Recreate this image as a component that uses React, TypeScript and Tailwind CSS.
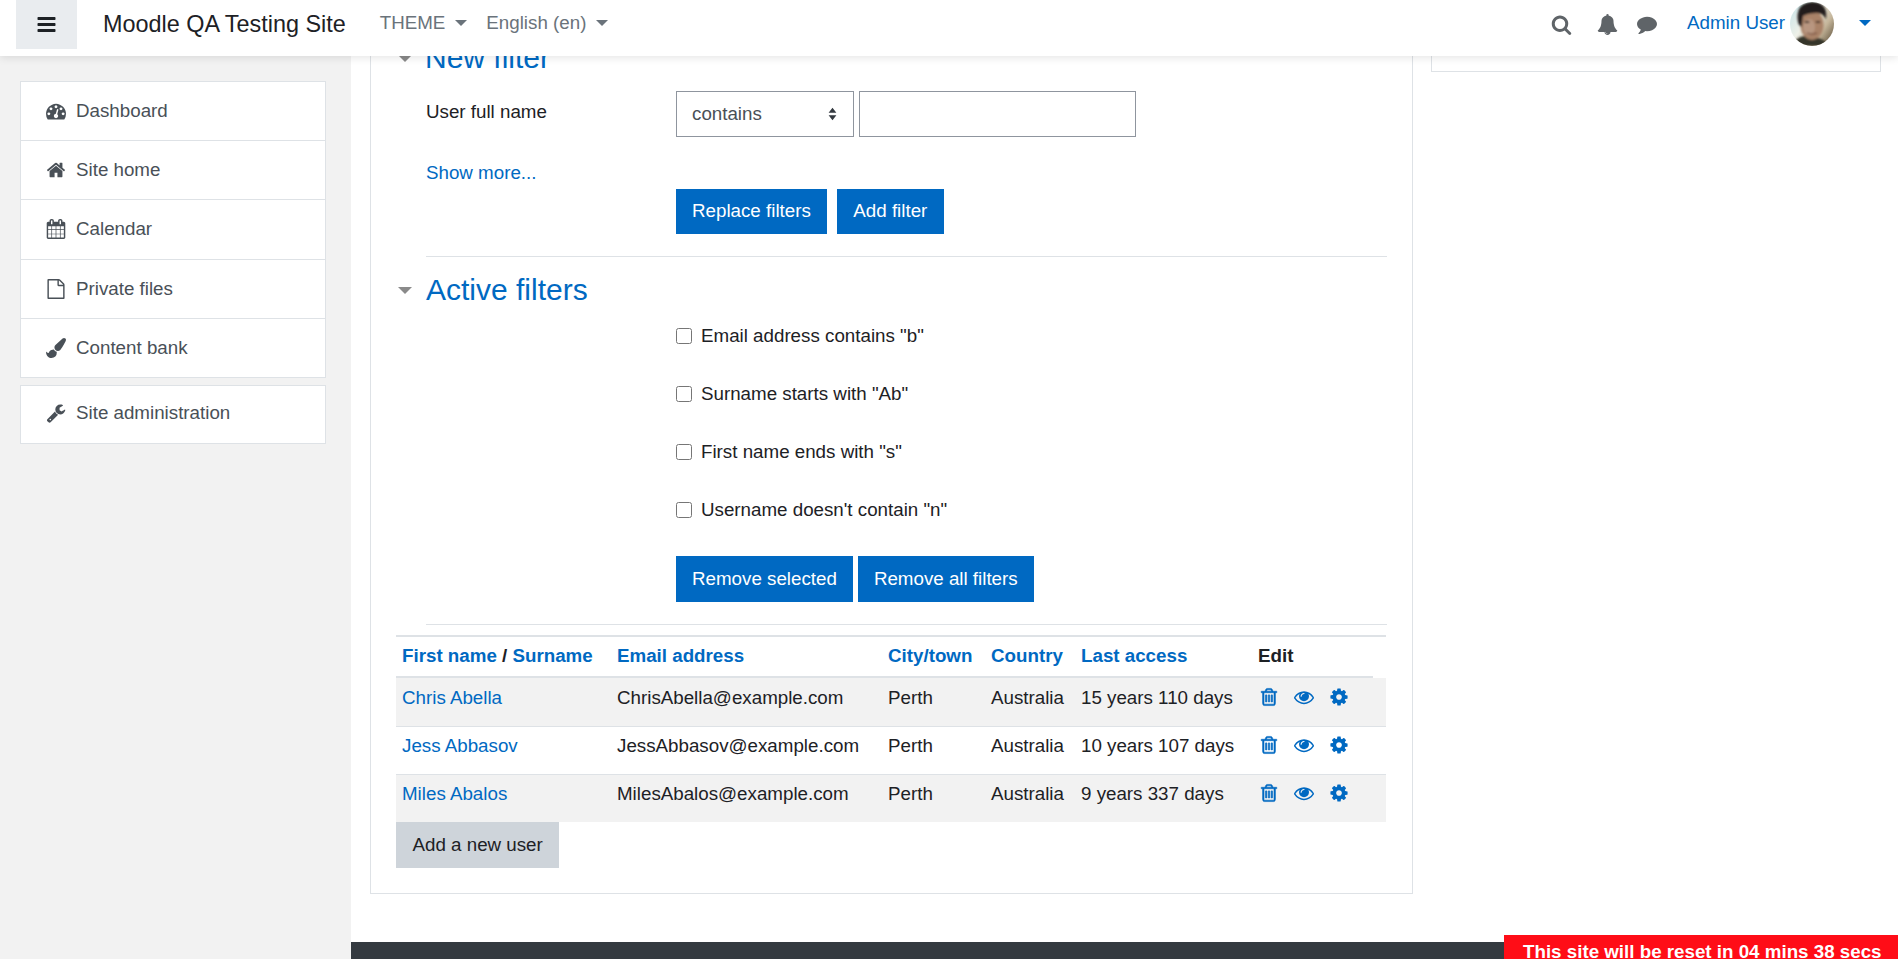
const icons = {
  bars: 'M1664 1344v128q0 26-19 45t-45 19h-1408q-26 0-45-19t-19-45v-128q0-26 19-45t45-19h1408q26 0 45 19t19 45zm0-512v128q0 26-19 45t-45 19h-1408q-26 0-45-19t-19-45v-128q0-26 19-45t45-19h1408q26 0 45 19t19 45zm0-512v128q0 26-19 45t-45 19h-1408q-26 0-45-19t-19-45v-128q0-26 19-45t45-19h1408q26 0 45 19t19 45z',
  search: 'M1216 832q0-185-131.5-316.5t-316.5-131.5-316.5 131.5-131.5 316.5 131.5 316.5 316.5 131.5 316.5-131.5 131.5-316.5zm512 832q0 52-38 90t-90 38q-54 0-90-38l-343-342q-179 124-399 124-143 0-273.5-55.5t-225-150-150-225-55.5-273.5 55.5-273.5 150-225 225-150 273.5-55.5 273.5 55.5 225 150 150 225 55.5 273.5q0 220-124 399l343 343q37 37 37 90z',
  bell: 'M912 1696q0-16-16-16-59 0-101.5-42.5t-42.5-101.5q0-16-16-16t-16 16q0 73 51.5 124.5t124.5 51.5q16 0 16-16zm816-288q0 52-38 90t-90 38h-448q0 106-75 181t-181 75-181-75-75-181h-448q-52 0-90-38t-38-90q50-42 91-88t85-119.5 74.5-158.5 50-206 19.5-260q0-152 117-282.5t307-158.5q-8-19-8-39 0-40 28-68t68-28 68 28 28 68q0 20-8 39 190 28 307 158.5t117 282.5q0 139 19.5 260t50 206 74.5 158.5 85 119.5 91 88z',
  comment: 'M1792 896q0 174-120 321.5t-326 233-450 85.5q-70 0-145-8-198 175-460 242-49 14-114 22-17 2-30.5-9t-17.5-29v-1q-3-4-.5-12t2-10 4.5-9.5l6-9 7-8.5 8-9q7-8 31-34.5t34.5-38 31-39.5 32.5-51 27-59 26-76q-157-89-247.5-220t-90.5-281q0-130 71-248.5t191-204.5 286-136.5 348-50.5q244 0 450 85.5t326 233 120 321.5z',
  dashboard: 'M384 1152q0-53-37.5-90.5t-90.5-37.5-90.5 37.5-37.5 90.5 37.5 90.5 90.5 37.5 90.5-37.5 37.5-90.5zm192-448q0-53-37.5-90.5t-90.5-37.5-90.5 37.5-37.5 90.5 37.5 90.5 90.5 37.5 90.5-37.5 37.5-90.5zm428 481l101-382q6-26-7.5-48.5t-38.5-29.5-48 6.5-30 39.5l-101 382q-60 5-107 43.5t-63 98.5q-20 77 20 146t117 89 146-20 89-117q16-60-6-117t-72-91zm660-33q0-53-37.5-90.5t-90.5-37.5-90.5 37.5-37.5 90.5 37.5 90.5 90.5 37.5 90.5-37.5 37.5-90.5zm-640-640q0-53-37.5-90.5t-90.5-37.5-90.5 37.5-37.5 90.5 37.5 90.5 90.5 37.5 90.5-37.5 37.5-90.5zm448 192q0-53-37.5-90.5t-90.5-37.5-90.5 37.5-37.5 90.5 37.5 90.5 90.5 37.5 90.5-37.5 37.5-90.5zm320 448q0 261-141 483-19 29-54 29h-1402q-35 0-54-29-141-221-141-483 0-182 71-348t191-286 286-191 348-71 348 71 286 191 191 286 71 348z',
  home: 'M1472 992v480q0 26-19 45t-45 19h-384v-384h-256v384h-384q-26 0-45-19t-19-45v-480q0-1 .5-3t.5-3l575-474 575 474q1 2 1 6zm223-69l-62 74q-8 9-21 11h-3q-13 0-21-7l-692-577-692 577q-12 8-24 7-13-2-21-11l-62-74q-8-10-7-23.5t11-21.5l719-599q32-26 76-26t76 26l244 204v-195q0-14 9-23t23-9h192q14 0 23 9t9 23v408l219 182q10 8 11 21.5t-7 23.5z',
  calendar: 'M192 1664h288v-288h-288v288zm352 0h320v-288h-320v288zm-352-352h288v-320h-288v320zm352 0h320v-320h-320v320zm-352-384h288v-288h-288v288zm736 736h320v-288h-320v288zm-384-736h320v-288h-320v288zm768 736h288v-288h-288v288zm-384-352h320v-320h-320v320zm-352-864v-288q0-13-9.5-22.5t-22.5-9.5h-64q-13 0-22.5 9.5t-9.5 22.5v288q0 13 9.5 22.5t22.5 9.5h64q13 0 22.5-9.5t9.5-22.5zm736 864h288v-320h-288v320zm-384-384h320v-288h-320v288zm384 0h288v-288h-288v288zm32-480v-288q0-13-9.5-22.5t-22.5-9.5h-64q-13 0-22.5 9.5t-9.5 22.5v288q0 13 9.5 22.5t22.5 9.5h64q13 0 22.5-9.5t9.5-22.5zm384-64v1280q0 52-38 90t-90 38h-1408q-52 0-90-38t-38-90v-1280q0-52 38-90t90-38h128v-96q0-66 47-113t113-47h64q66 0 113 47t47 113v96h384v-96q0-66 47-113t113-47h64q66 0 113 47t47 113v96h128q52 0 90 38t38 90z',
  file: 'M1596 380q28 28 48 76t20 88v1152q0 40-28 68t-68 28h-1344q-40 0-68-28t-28-68v-1600q0-40 28-68t68-28h896q40 0 88 20t76 48zm-444-244v376h376q-10-29-22-41l-313-313q-12-12-41-22zm384 1528v-1024h-416q-40 0-68-28t-28-68v-416h-768v1536h1280z',
  brush: 'M1615 0q70 0 122.5 46.5t52.5 116.5q0 63-45 151-332 629-465 752-97 91-218 91-126 0-216.5-92.5t-90.5-219.5q0-128 92-212l638-579q59-54 130-54zm-909 1034q39 76 106.5 130t150.5 76l1 71q4 213-129.5 347t-348.5 134q-123 0-218-46.5t-152.5-127.5-86.5-183-29-220q7 5 41 30t62 44.5 59 36.5 46 17q41 0 55-37 25-66 57.5-112.5t69.5-76 88-47.5 103-25.5 125-10.5z',
  wrench: 'M448 1472q0-26-19-45t-45-19-45 19-19 45 19 45 45 19 45-19 19-45zm644-420l-682 682q-37 37-90 37-52 0-91-37l-106-108q-38-36-38-90 0-53 38-91l681-681q39 98 114.5 173.5t173.5 114.5zm634-435q0 39-23 106-47 134-164.5 217.5t-258.5 83.5q-185 0-316.5-131.5t-131.5-316.5 131.5-316.5 316.5-131.5q58 0 121.5 16.5t107.5 46.5q16 11 16 28t-16 28l-293 169v224l193 111q5-3 79-48.5t135.5-81 70.5-35.5q15 0 23.5 10t8.5 25z',
  trash: 'M704 736v576q0 14-9 23t-23 9h-64q-14 0-23-9t-9-23v-576q0-14 9-23t23-9h64q14 0 23 9t9 23zm256 0v576q0 14-9 23t-23 9h-64q-14 0-23-9t-9-23v-576q0-14 9-23t23-9h64q14 0 23 9t9 23zm256 0v576q0 14-9 23t-23 9h-64q-14 0-23-9t-9-23v-576q0-14 9-23t23-9h64q14 0 23 9t9 23zm128 724v-948h-896v948q0 22 7 40.5t14.5 27 10.5 8.5h832q3 0 10.5-8.5t14.5-27 7-40.5zm-672-1076h448l-48-117q-7-9-17-11h-317q-10 2-17 11zm928 32v64q0 14-9 23t-23 9h-96v948q0 83-47 143.5t-113 60.5h-832q-66 0-113-58.5t-47-141.5v-952h-96q-14 0-23-9t-9-23v-64q0-14 9-23t23-9h309l70-167q15-37 54-63t79-26h320q40 0 79 26t54 63l70 167h309q14 0 23 9t9 23z',
  eye: 'M1664 960q-152-236-381-353 61 104 61 225 0 185-131.5 316.5t-316.5 131.5-316.5-131.5-131.5-316.5q0-121 61-225-229 117-381 353 133 205 333.5 326.5t434.5 121.5 434.5-121.5 333.5-326.5zm-720-384q0-20-14-34t-34-14q-125 0-214.5 89.5t-89.5 214.5q0 20 14 34t34 14 34-14 14-34q0-86 61-147t147-61q20 0 34-14t14-34zm848 384q0 34-20 69-140 230-376.5 368.5t-499.5 138.5-499.5-139-376.5-368q-20-35-20-69t20-69q140-229 376.5-368t499.5-139 499.5 139 376.5 368q20 35 20 69z',
  cog: 'M1152 896q0-106-75-181t-181-75-181 75-75 181 75 181 181 75 181-75 75-181zm512-109v222q0 12-8 23t-20 13l-185 28q-19 54-39 91 35 50 107 138 10 12 10 25t-9 23q-27 37-99 108t-94 71q-12 0-26-9l-138-108q-44 23-91 38-16 136-29 186-7 28-36 28h-222q-14 0-24.5-8.5t-11.5-21.5l-28-184q-49-16-90-37l-141 107q-10 9-25 9-14 0-25-11-126-114-165-168-7-10-7-23 0-12 8-23 15-21 51-66.5t54-70.5q-27-50-41-99l-183-27q-13-2-21-12.5t-8-23.5v-222q0-12 8-23t19-13l186-28q14-46 39-92-40-57-107-138-10-12-10-24 0-10 9-23 26-36 98.5-107.5t94.5-71.5q13 0 26 10l138 107q44-23 91-38 16-136 29-186 7-28 36-28h222q14 0 24.5 8.5t11.5 21.5l28 184q49 16 90 37l142-107q9-9 24-9 13 0 25 10 129 119 165 170 7 8 7 22 0 12-8 23-15 21-51 66.5t-54 70.5q26 50 41 98l183 28q13 2 21 12.5t8 23.5z',
};

function Icon({ d, className, bold }: { d: string; className?: string; bold?: boolean }) {
  return (
    <svg viewBox="0 0 1792 1792" fill="currentColor" className={className}>
      <path d={d} stroke={bold ? 'currentColor' : undefined} strokeWidth={bold ? 50 : undefined} />
    </svg>
  );
}

function Caret({ className }: { className: string }) {
  return <span className={`inline-block w-0 h-0 border-x-[6px] border-x-transparent border-t-[6px] ${className}`} />;
}

function SectionCaret({ className }: { className: string }) {
  return <span className={`inline-block w-0 h-0 border-x-[7.5px] border-x-transparent border-t-[7px] border-t-[#8a8a8a] ${className}`} />;
}

function Avatar() {
  return (
    <svg viewBox="0 0 44 44" className="w-[44px] h-[44px] rounded-full shrink-0">
      <defs>
        <linearGradient id="bg" x1="0" y1="0" x2="1" y2="0.7">
          <stop offset="0" stopColor="#c4e2e8" />
          <stop offset="0.45" stopColor="#eef0e8" />
          <stop offset="0.8" stopColor="#c4b59a" />
          <stop offset="1" stopColor="#7d6f58" />
        </linearGradient>
        <filter id="soft">
          <feGaussianBlur stdDeviation="0.9" />
        </filter>
      </defs>
      <rect width="44" height="44" fill="url(#bg)" />
      <g filter="url(#soft)">
        <path d="M2 44 Q6 35 14 34 L28 36 Q36 38 38 44 Z" fill="#36352a" />
        <ellipse cx="22" cy="23" rx="11.5" ry="15" fill="#a98268" />
        <ellipse cx="19" cy="25" rx="6" ry="8" fill="#b89680" />
        <path d="M8 20 Q5 1 22 0 Q38 0 36 17 Q33 11 27 11 Q18 11 13 14 Q12 19 12 25 Q9 24 8 20 Z" fill="#211c1a" />
        <ellipse cx="17" cy="20" rx="2.6" ry="1.1" fill="#3a2a22" />
        <ellipse cx="28" cy="20" rx="2.6" ry="1.1" fill="#3a2a22" />
        <path d="M17 31 Q22 33 27 31" stroke="#6e4638" strokeWidth="1.2" fill="none" />
      </g>
    </svg>
  );
}

const navItems = [
  { label: 'Dashboard', icon: icons.dashboard },
  { label: 'Site home', icon: icons.home },
  { label: 'Calendar', icon: icons.calendar },
  { label: 'Private files', icon: icons.file },
  { label: 'Content bank', icon: icons.brush },
];

const activeFilters = [
  'Email address contains "b"',
  'Surname starts with "Ab"',
  'First name ends with "s"',
  "Username doesn't contain \"n\"",
];

const users = [
  { name: 'Chris Abella', email: 'ChrisAbella@example.com', access: '15 years 110 days' },
  { name: 'Jess Abbasov', email: 'JessAbbasov@example.com', access: '10 years 107 days' },
  { name: 'Miles Abalos', email: 'MilesAbalos@example.com', access: '9 years 337 days' },
];

function NavRow({ label, icon, className }: { label: string; icon: string; className: string }) {
  return (
    <div className={`flex items-center pl-[25px] text-[#495057] ${className}`}>
      <Icon d={icon} className="w-[20px] h-[20px] mr-[10px]" />
      {label}
    </div>
  );
}

function PrimaryButton({ children, className }: { children: React.ReactNode; className: string }) {
  return <button className={`bg-[#0069c2] text-white ${className}`}>{children}</button>;
}

const headCell = 'px-[6px] pb-[1px] border-t-2 border-b-2 border-[#dee2e6]';

export default function App() {
  return (
    <div className="relative flex w-screen h-screen overflow-hidden bg-white text-[18.75px] leading-[28px] text-[#1d2125] font-['Liberation_Sans',Arial,sans-serif]">
      {/* top bar sits over the scrolled page */}
      <header className="absolute top-0 inset-x-0 z-10 flex items-start h-[56px] bg-white shadow-[0_2px_8px_rgba(0,0,0,0.1)]">
        <div className="flex items-center justify-center ml-[16px] w-[61px] h-[49px] bg-[#e9ecef] text-[#1d2125]">
          <Icon d={icons.bars} className="w-[21px] h-[21px] -ml-[1px]" />
        </div>
        <div className="ml-[26px] mt-[6px] text-[23.4px] leading-[36px]">Moodle QA Testing Site</div>
        <div className="flex items-center ml-[34px] mt-[9px] text-[#6a737b]">
          THEME
          <Caret className="ml-[10px] border-t-[#6a737b]" />
        </div>
        <div className="flex items-center ml-[19px] mt-[9px] text-[#6a737b]">
          English (en)
          <Caret className="ml-[10px] border-t-[#6a737b]" />
        </div>
        <div className="flex items-center ml-auto mt-[2px] h-[44px] pr-[27px] text-[#5f6468]">
          <Icon d={icons.search} className="w-[21px] h-[21px]" />
          <Icon d={icons.bell} className="w-[21px] h-[21px] ml-[25px]" />
          <Icon d={icons.comment} className="w-[20px] h-[20px] ml-[19px]" />
          <span className="ml-[30px] -mt-[2px] text-[#0069c2]">Admin User</span>
          <span className="ml-[5px]"><Avatar /></span>
          <Caret className="ml-[25px] -mt-[3px] border-t-[#0069c2]" />
        </div>
      </header>

      <aside className="w-[351px] shrink-0 bg-[#f2f2f2] pt-[81px] pl-[20px] pr-[25px]">
        <div className="bg-white border border-[#dee2e6]">
          {navItems.map((item, i) => (
            <NavRow
              key={item.label}
              label={item.label}
              icon={item.icon}
              className={i === navItems.length - 1 ? 'h-[58.2px]' : 'h-[59.2px] border-b border-[#dee2e6]'}
            />
          ))}
        </div>
        <div className="mt-[7px] bg-white border border-[#dee2e6]">
          <NavRow label="Site administration" icon={icons.wrench} className="h-[57px] pb-[2px]" />
        </div>
      </aside>

      <div className="flex-1 flex flex-col min-w-0">
        <div className="flex items-start gap-[18px] pl-[19px]">
          <section className="w-[1043px] shrink-0 border border-[#dee2e6] pt-[39px] px-[25px] pb-[25px]">
            <div className="flex items-center h-[36px]">
              <SectionCaret className="ml-[2px] mr-[13px]" />
              <h3 className="text-[30px] leading-[36px] text-[#0069c2]">New filter</h3>
            </div>
            <div className="pl-[30px]">
              <div className="flex items-start mt-[15px]">
                <label className="w-[250px] pt-[7px]">User full name</label>
                <div className="relative">
                  <select className="appearance-none w-[178px] h-[46px] pl-[15px] border border-[#8f959e] bg-white text-[#495057]">
                    <option>contains</option>
                  </select>
                  <svg viewBox="0 0 10 18" className="absolute right-[16px] top-[16px] w-[11px] h-[14px] fill-[#343a40]">
                    <path d="M5 1 L10 7.5 H0 Z M5 17 L10 10.5 H0 Z" />
                  </svg>
                </div>
                <input className="ml-[5px] w-[277px] h-[46px] border border-[#8f959e] bg-white" />
              </div>
              <div className="mt-[22px] text-[#0069c2]">Show more...</div>
              <div className="flex gap-[10px] mt-[2px] pl-[250px]">
                <PrimaryButton className="h-[45px] px-[16px] pb-[2px]">Replace filters</PrimaryButton>
                <PrimaryButton className="h-[45px] px-[16.5px] pb-[2px]">Add filter</PrimaryButton>
              </div>
              <div className="mt-[22px] border-t border-[#dee2e6]" />
            </div>

            <div className="flex items-center h-[36px] mt-[15px]">
              <SectionCaret className="ml-[2px] mr-[14px]" />
              <h3 className="text-[30px] leading-[36px] text-[#0069c2]">Active filters</h3>
            </div>
            <div className="pl-[280px] mt-[14px] flex flex-col gap-[30px]">
              {activeFilters.map((f) => (
                <label key={f} className="flex items-center h-[28px]">
                  <input type="checkbox" className="w-[16px] h-[16px] m-0 mr-[9px]" />
                  {f}
                </label>
              ))}
            </div>
            <div className="flex gap-[5px] mt-[32px] pl-[280px]">
              <PrimaryButton className="h-[46px] px-[16px]">Remove selected</PrimaryButton>
              <PrimaryButton className="h-[46px] px-[16px]">Remove all filters</PrimaryButton>
            </div>
            <div className="ml-[30px] mt-[22px] border-t border-[#dee2e6]" />

            <table className="mt-[10px] w-[990px] table-fixed border-separate border-spacing-0">
              <colgroup>
                <col className="w-[215px]" />
                <col className="w-[271px]" />
                <col className="w-[103px]" />
                <col className="w-[90px]" />
                <col className="w-[177px]" />
                <col className="w-[121px]" />
                <col className="w-[13px]" />
              </colgroup>
              <thead>
                <tr className="h-[43px] font-bold text-left">
                  <th className={`${headCell} whitespace-nowrap`}>
                    <span className="text-[#0069c2]">First name</span> / <span className="text-[#0069c2]">Surname</span>
                  </th>
                  <th className={`${headCell} text-[#0069c2]`}>Email address</th>
                  <th className={`${headCell} text-[#0069c2]`}>City/town</th>
                  <th className={`${headCell} text-[#0069c2]`}>Country</th>
                  <th className={`${headCell} text-[#0069c2]`}>Last access</th>
                  <th className={headCell}>Edit</th>
                  <th className="border-t-2 border-[#dee2e6]" />
                </tr>
              </thead>
              <tbody>
                {users.map((u, i) => {
                  // rows after the first carry a divider, so their text starts 1px less below it
                  const cell = `align-top ${i ? 'pt-[5px] border-t border-[#dee2e6]' : 'pt-[6px]'}`;
                  return (
                    <tr key={u.email} className={`h-[48px] ${i % 2 === 0 ? 'bg-[#f2f2f2]' : ''}`}>
                      <td className={`${cell} px-[6px] text-[#0069c2]`}>{u.name}</td>
                      <td className={`${cell} px-[6px]`}>{u.email}</td>
                      <td className={`${cell} px-[6px]`}>Perth</td>
                      <td className={`${cell} px-[6px]`}>Australia</td>
                      <td className={`${cell} px-[6px] whitespace-nowrap`}>{u.access}</td>
                      <td colSpan={2} className={cell}>
                        <div className="flex items-center h-[26px] text-[#0069c2]">
                          <span className="flex justify-center w-[33px]"><Icon d={icons.trash} bold className="w-[20px] h-[20px]" /></span>
                          <span className="flex justify-center w-[37px]"><Icon d={icons.eye} className="w-[20px] h-[20px]" /></span>
                          <span className="flex justify-center w-[33px]"><Icon d={icons.cog} className="w-[20px] h-[20px]" /></span>
                        </div>
                      </td>
                    </tr>
                  );
                })}
              </tbody>
            </table>
            <button className="block h-[46px] px-[16.5px] bg-[#ced4da]">Add a new user</button>
          </section>
          <div className="w-[450px] shrink-0 h-[72px] border border-[#dee2e6]" />
        </div>
        <footer className="mt-[48px] flex-1 bg-[#343a40]" />
      </div>

      <div className="absolute right-0 bottom-[-10px] h-[34px] w-[394px] pl-[19px] pt-[3px] bg-[#ff0d17] text-white font-bold whitespace-nowrap">
        This site will be reset in 04 mins 38 secs
      </div>
    </div>
  );
}
